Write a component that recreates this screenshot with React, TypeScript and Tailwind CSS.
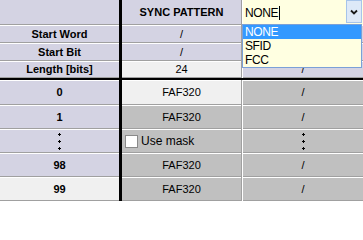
import React from "react";

const LAV = "bg-[#d4d3e3]";
const LIGHT = "bg-[#f0f0f0]";
const GRAY = "bg-[#c0c0c0]";

function Cell({
  bg,
  children,
  bold,
  top = true,
  className = "",
}: {
  bg: string;
  children?: React.ReactNode;
  bold?: boolean;
  top?: boolean;
  className?: string;
}) {
  return (
    <div
      className={`flex h-full items-center justify-center border-b border-b-[#a0a0a0] ${
        top ? "border-t border-t-white" : ""
      } ${bold ? "font-bold" : ""} ${bg} ${className}`}
    >
      {children}
    </div>
  );
}

function Dots() {
  return (
    <div className="flex flex-col items-center gap-[4px]">
      {[0, 1, 2].map((i) => (
        <svg key={i} width="3" height="3" viewBox="0 0 3 3">
          <rect x="1" y="0" width="1" height="3" fill="#000" />
          <rect x="0" y="1" width="3" height="1" fill="#000" />
        </svg>
      ))}
    </div>
  );
}

function Row({
  h,
  c1,
  c2,
  c3,
}: {
  h: string;
  c1: React.ReactNode;
  c2: React.ReactNode;
  c3: React.ReactNode;
}) {
  return (
    <div className={`flex ${h}`}>
      <div className="w-[119px] h-full">{c1}</div>
      <div className="w-[3px] h-full bg-black" />
      <div className="w-[120px] h-full border-r border-r-[#a0a0a0]">{c2}</div>
      <div className="flex-1 h-full border-l border-l-white">{c3}</div>
    </div>
  );
}

export default function App() {
  return (
    <div className="relative w-[363px] h-[201px] overflow-hidden bg-[#d4d3e3] text-[11px] leading-none text-black font-['Liberation_Sans',Arial,sans-serif]">
      {/* header */}
      <Row
        h="h-[25px]"
        c1={<Cell bg={LAV} top={false} />}
        c2={
          <Cell bg={LAV} top={false} bold>
            SYNC PATTERN
          </Cell>
        }
        c3={
          <div className="flex h-full bg-[#ffffe1]">
            <div className="flex flex-1 items-center pl-[2px] text-[12px] tracking-[-0.4px]">
              <span>NONE</span>
              <span className="ml-[1px] inline-block h-[14px] w-[1px] bg-black" />
            </div>
            <div className="mr-[1px] flex h-[23px] w-[16px] items-center justify-center border border-[#a6c4ea] bg-[#dde9f8]">
              <svg width="8" height="6" viewBox="0 0 8 6">
                <path d="M1 1.5 L4 4.5 L7 1.5" stroke="#1a1a1a" strokeWidth="1.8" fill="none" />
              </svg>
            </div>
          </div>
        }
      />
      <Row
        h="h-[18px]"
        c1={
          <Cell bg={LAV} bold>
            Start Word
          </Cell>
        }
        c2={<Cell bg={LAV}>/</Cell>}
        c3={<Cell bg={LAV}>/</Cell>}
      />
      <Row
        h="h-[18px]"
        c1={
          <Cell bg={LAV} bold>
            Start Bit
          </Cell>
        }
        c2={<Cell bg={LAV}>/</Cell>}
        c3={<Cell bg={LAV}>/</Cell>}
      />
      <Row
        h="h-[17px]"
        c1={
          <Cell bg={LAV} bold>
            Length [bits]
          </Cell>
        }
        c2={<Cell bg={LIGHT} className="border-t-[#a0a0a0]">24</Cell>}
        c3={<Cell bg={LAV}>/</Cell>}
      />
      <div className="h-[2px] bg-black" />
      <Row
        h="h-[25px]"
        c1={
          <Cell bg={LAV} bold>
            0
          </Cell>
        }
        c2={<Cell bg={LIGHT}>FAF320</Cell>}
        c3={<Cell bg={GRAY}>/</Cell>}
      />
      <Row
        h="h-[24px]"
        c1={
          <Cell bg={LAV} bold>
            1
          </Cell>
        }
        c2={<Cell bg={GRAY}>FAF320</Cell>}
        c3={<Cell bg={GRAY}>/</Cell>}
      />
      <Row
        h="h-[24px]"
        c1={
          <Cell bg={LAV}>
            <Dots />
          </Cell>
        }
        c2={
          <Cell bg={GRAY} className="!justify-start pl-[3px]">
            <span className="inline-block h-[13px] w-[13px] border border-[#8a8a8a] bg-white" />
            <span className="ml-[3px] text-[12px]">Use mask</span>
          </Cell>
        }
        c3={
          <Cell bg={GRAY}>
            <Dots />
          </Cell>
        }
      />
      <Row
        h="h-[24px]"
        c1={
          <Cell bg={LAV} bold>
            98
          </Cell>
        }
        c2={<Cell bg={GRAY}>FAF320</Cell>}
        c3={<Cell bg={GRAY}>/</Cell>}
      />
      <Row
        h="h-[24px]"
        c1={
          <Cell bg={LIGHT} bold>
            99
          </Cell>
        }
        c2={<Cell bg={GRAY}>FAF320</Cell>}
        c3={<Cell bg={GRAY}>/</Cell>}
      />

      {/* dropdown list overlay */}
      <div className="absolute left-[242px] top-[24px] h-[44px] w-[120px] border border-[#7ba0d8] bg-[#ffffe1] text-[12px] tracking-[-0.4px]">
        <div className="flex h-[14px] items-center bg-[#3399ff] pl-[2px] text-white">NONE</div>
        <div className="flex h-[14px] items-center pl-[2px]">SFID</div>
        <div className="flex h-[14px] items-center pl-[2px]">FCC</div>
      </div>
    </div>
  );
}
